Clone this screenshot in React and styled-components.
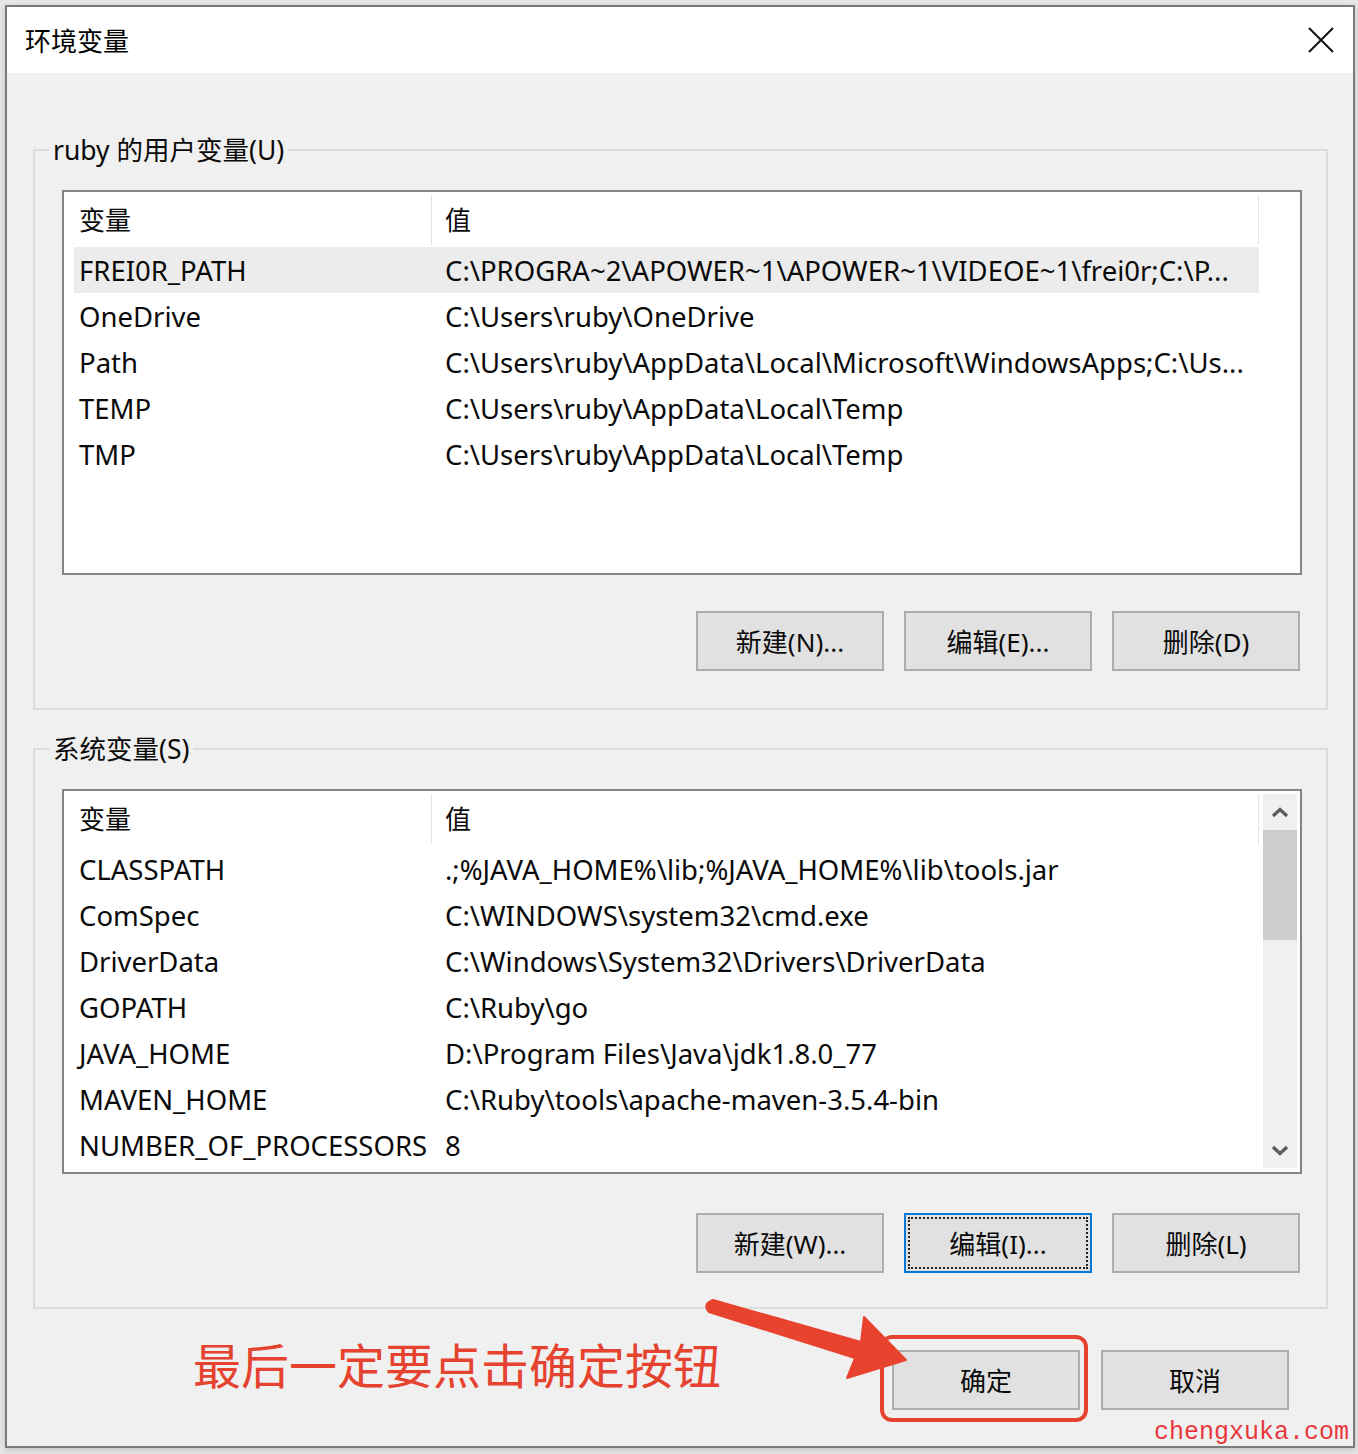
import React from 'react';
import styled, { createGlobalStyle } from 'styled-components';

const userVars = [
  ['FREI0R_PATH', 'C:\\PROGRA~2\\APOWER~1\\APOWER~1\\VIDEOE~1\\frei0r;C:\\P...'],
  ['OneDrive', 'C:\\Users\\ruby\\OneDrive'],
  ['Path', 'C:\\Users\\ruby\\AppData\\Local\\Microsoft\\WindowsApps;C:\\Us...'],
  ['TEMP', 'C:\\Users\\ruby\\AppData\\Local\\Temp'],
  ['TMP', 'C:\\Users\\ruby\\AppData\\Local\\Temp'],
];

const systemVars = [
  ['CLASSPATH', '.;%JAVA_HOME%\\lib;%JAVA_HOME%\\lib\\tools.jar'],
  ['ComSpec', 'C:\\WINDOWS\\system32\\cmd.exe'],
  ['DriverData', 'C:\\Windows\\System32\\Drivers\\DriverData'],
  ['GOPATH', 'C:\\Ruby\\go'],
  ['JAVA_HOME', 'D:\\Program Files\\Java\\jdk1.8.0_77'],
  ['MAVEN_HOME', 'C:\\Ruby\\tools\\apache-maven-3.5.4-bin'],
  ['NUMBER_OF_PROCESSORS', '8'],
];

const Chevron = ({ up }) => (
  <svg width="18" height="11" viewBox="0 0 18 11">
    <path
      d={up ? 'M2 9 L9 2.5 L16 9' : 'M2 2 L9 8.5 L16 2'}
      fill="none"
      stroke="#5a5a5a"
      strokeWidth="3.2"
    />
  </svg>
);

const VarList = ({ rows, selected, scroll }) => (
  <ListBox>
    <Table>
      <Row $header>
        <HeaderCell $col="name">变量</HeaderCell>
        <HeaderCell $col="value">值</HeaderCell>
      </Row>
      {rows.map(([name, value], i) => (
        <Row key={name} $selected={i === selected}>
          <Cell $col="name">{name}</Cell>
          <Cell $col="value">{value}</Cell>
        </Row>
      ))}
    </Table>
    {scroll && (
      <ScrollBar>
        <ScrollButton>
          <Chevron up />
        </ScrollButton>
        <Thumb />
        <ScrollButton $bottom>
          <Chevron />
        </ScrollButton>
      </ScrollBar>
    )}
  </ListBox>
);

const App = () => {
  return (
    <Page>
      <GlobalStyle />
      <Window>
        <TitleBar>
          <Title>环境变量</Title>
          <svg width="26" height="26" viewBox="0 0 26 26">
            <path d="M1 1 L25 25 M25 1 L1 25" stroke="#111" strokeWidth="2" />
          </svg>
        </TitleBar>
        <Body>
          <Group>
            <Legend>ruby 的用户变量(U)</Legend>
            <VarList rows={userVars} selected={0} />
            <ButtonRow>
              <Button>新建(N)...</Button>
              <Button>编辑(E)...</Button>
              <Button>删除(D)</Button>
            </ButtonRow>
          </Group>
          <Group $second>
            <Legend>系统变量(S)</Legend>
            <VarList rows={systemVars} scroll />
            <ButtonRow $second>
              <Button>新建(W)...</Button>
              <Button $focused>编辑(I)...</Button>
              <Button>删除(L)</Button>
            </ButtonRow>
          </Group>
          <Footer>
            <Hint>最后一定要点击确定按钮</Hint>
            <FooterButtons>
              <Highlight>
                <Button>确定</Button>
              </Highlight>
              <Button>取消</Button>
            </FooterButtons>
          </Footer>
        </Body>
      </Window>
      <Arrow width="1358" height="1454" viewBox="0 0 1358 1454">
        <path
          d="M713 1300 L861 1342 L864 1317 L906 1360 L847 1378 L855 1358 L709 1312 Q702 1304 713 1300 Z"
          fill="#e8432e"
          stroke="#e8432e"
          strokeWidth="2"
          strokeLinejoin="round"
        />
      </Arrow>
      <Watermark>chengxuka.com</Watermark>
    </Page>
  );
};

export default App;

const GlobalStyle = createGlobalStyle`
  body {
    margin: 0;
    background: #e6e6e6;
    font-family: "Noto Sans", "Noto Sans CJK SC", sans-serif;
    color: #0a0a0a;
  }
`;

const Page = styled.div`
  position: relative;
  width: 1358px;
  height: 1454px;
  padding: 5px 3px 0 5px;
  box-sizing: border-box;
  overflow: hidden;
`;

const Window = styled.div`
  height: 1443px;
  box-sizing: border-box;
  border: 2px solid #7a7a7a;
  background: #f0f0f0;
  display: flex;
  flex-direction: column;
  box-shadow: 0 2px 6px rgba(0, 0, 0, 0.15);
`;

const TitleBar = styled.div`
  height: 66px;
  flex-shrink: 0;
  background: #fff;
  display: flex;
  align-items: center;
  justify-content: space-between;
  padding: 0 19px 0 18px;
`;

const Title = styled.div`
  font-size: 26px;
  color: #000;
`;

const Body = styled.div`
  flex: 1;
  padding: 61px 25px 0 26px;
`;

const Group = styled.fieldset`
  margin: ${(p) => (p.$second ? '23px' : '0')} 0 0 0;
  border: 2px solid #dcdcdc;
  padding: 24px 24px ${(p) => (p.$second ? '34px' : '37px')} 27px;
  min-width: 0;
`;

const Legend = styled.legend`
  margin-left: -13px;
  padding: 0 4px;
  font-size: 26.5px;
  line-height: 32px;
`;

const ListBox = styled.div`
  height: 385px;
  box-sizing: border-box;
  border: 2px solid #848484;
  background: #fff;
  padding: 3px 3px 4px 10px;
  display: flex;
`;

const Table = styled.div`
  width: 1185px;
  display: flex;
  flex-direction: column;
`;

const Row = styled.div`
  display: grid;
  grid-template-columns: 358px 827px;
  height: ${(p) => (p.$header ? '52px' : '46px')};
  align-items: ${(p) => (p.$header ? 'start' : 'center')};
  background: ${(p) => (p.$selected ? '#ececec' : 'transparent')};
  white-space: nowrap;
`;

const HeaderCell = styled.div`
  height: 50px;
  line-height: 50px;
  font-size: 26px;
  padding-left: ${(p) => (p.$col === 'name' ? '5px' : '13px')};
  border-right: 1px solid #e5e5e5;
`;

const Cell = styled.div`
  font-size: 27.5px;
  padding-left: ${(p) => (p.$col === 'name' ? '5px' : '13px')};
  overflow: hidden;
`;

const ScrollBar = styled.div`
  margin-left: auto;
  width: 34px;
  background: #f0f0f0;
  display: flex;
  flex-direction: column;
`;

const ScrollButton = styled.div`
  height: 36px;
  margin-top: ${(p) => (p.$bottom ? 'auto' : '0')};
  display: flex;
  align-items: center;
  justify-content: center;
`;

const Thumb = styled.div`
  height: 110px;
  background: #cdcdcd;
`;

const ButtonRow = styled.div`
  display: flex;
  justify-content: flex-end;
  gap: 20px;
  margin: ${(p) => (p.$second ? '39px' : '36px')} 2px 0 0;
`;

const Button = styled.button`
  width: 188px;
  height: 60px;
  box-sizing: border-box;
  background: #e1e1e1;
  border: 2px solid ${(p) => (p.$focused ? '#0078d7' : '#adadad')};
  outline: ${(p) => (p.$focused ? '2px dotted #222' : 'none')};
  outline-offset: -6px;
  font-family: inherit;
  font-size: 26px;
  color: #0a0a0a;
  padding: 0;
`;

const Footer = styled.div`
  display: flex;
  align-items: center;
  margin-top: 41px;
  padding: 0 39px 0 160px;
`;

const Hint = styled.div`
  font-size: 48px;
  line-height: 60px;
  color: #e5432f;
  margin-top: -28px;
`;

const FooterButtons = styled.div`
  margin-left: auto;
  display: flex;
  gap: 21px;
`;

const Highlight = styled.div`
  border: 4px solid #e5432f;
  border-radius: 12px;
  padding: 11px 4px 8px 8px;
  margin: -15px -8px -12px -12px;
`;

const Arrow = styled.svg`
  position: absolute;
  top: 0;
  left: 0;
  pointer-events: none;
`;

const Watermark = styled.div`
  position: absolute;
  right: 9px;
  bottom: 7px;
  font-family: "Liberation Mono", monospace;
  font-size: 25px;
  color: #e8383d;
`;
